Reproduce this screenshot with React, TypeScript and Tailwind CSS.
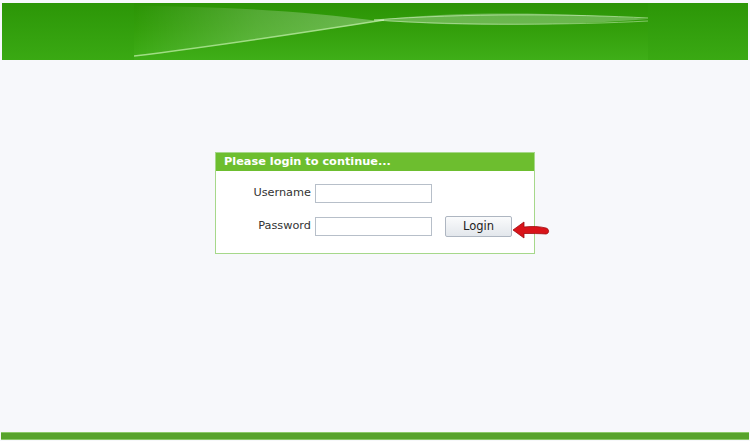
import React from 'react'

function Banner() {
  return (
    <svg width="514" height="57" viewBox="0 0 514 57" className="block">
      <defs>
        <linearGradient id="bg" x1="0" y1="0" x2="0" y2="1">
          <stop offset="0" stopColor="#2b9305" />
          <stop offset="0.5" stopColor="#34a00c" />
          <stop offset="1" stopColor="#3fae18" />
        </linearGradient>
        <linearGradient id="sheen" x1="0" y1="0" x2="1" y2="0">
          <stop offset="0" stopColor="#ffffff" stopOpacity="0" />
          <stop offset="0.5" stopColor="#ffffff" stopOpacity="0.3" />
          <stop offset="1" stopColor="#ffffff" stopOpacity="0.5" />
        </linearGradient>
      </defs>
      <rect width="514" height="57" fill="url(#bg)" />
      <path d="M0 53 C 80 42, 170 30, 245 18 C 170 8, 80 3, 0 3 Z" fill="url(#sheen)" opacity="0.6" />
      <path d="M0 53 C 90 42, 180 28, 250 17" stroke="#b9eaa0" strokeWidth="1.5" fill="none" opacity="0.8" />
      <path d="M240 17 C 330 7, 440 10, 514 16 C 440 22, 330 25, 240 17 Z" fill="#ffffff" opacity="0.28" />
      <path d="M240 17 C 330 10, 440 11, 514 15" stroke="#d6f5c6" strokeWidth="1" fill="none" opacity="0.6" />
      <path d="M240 17 C 330 23, 440 22, 514 18" stroke="#d6f5c6" strokeWidth="1" fill="none" opacity="0.5" />
    </svg>
  )
}

function Arrow() {
  return (
    <svg width="40" height="20" viewBox="0 0 40 20" className="absolute left-[511px] top-[220px]">
      <path
        d="M2 10 L13 2 L13 7 C 21 6, 29 6.5, 35 8 C 38.5 9, 38.5 13.5, 35 14 C 29 13.5, 21 13.5, 13 13.5 L13 18 Z"
        fill="#d9141a"
        stroke="#a00b0f"
        strokeWidth="0.8"
      />
    </svg>
  )
}

export default function App() {
  return (
    <div
      className="relative w-[750px] h-[441px] bg-[#f7f8fb] flex flex-col overflow-hidden"
      style={{ fontFamily: '"DejaVu Sans", Verdana, sans-serif' }}
    >
      <header className="mt-[3px] mx-[2px] h-[57px] flex">
        <div className="w-[132px] bg-gradient-to-b from-[#2c9607] to-[#3aa913]" />
        <Banner />
        <div className="flex-1 bg-gradient-to-b from-[#2c9607] to-[#3aa913]" />
      </header>

      <main className="flex-1 pt-[92px] pl-[215px]">
        <div className="w-[320px] h-[102px] border border-[#a6d88a] bg-white">
          <div className="h-[18px] bg-[#6dbe2f] px-[8px] text-[11.3px] leading-[18px] font-bold text-white">
            Please login to continue...
          </div>
          <div className="pt-[13px] flex flex-col gap-[13px]">
            <div className="flex items-center">
              <label className="w-[99px] text-right pr-[4px] text-[11.3px] text-[#333]">Username</label>
              <input className="w-[117px] h-[19px] border border-[#b7bfc9] bg-white" />
            </div>
            <div className="flex items-center">
              <label className="w-[99px] text-right pr-[4px] text-[11.3px] text-[#333]">Password</label>
              <input type="password" className="w-[117px] h-[19px] border border-[#b7bfc9] bg-white" />
              <button className="ml-[13px] w-[67px] h-[21px] border border-[#aeb6c1] rounded-[2px] bg-gradient-to-b from-[#fafbfc] to-[#e3e7ec] text-[11.5px] text-[#222]">
                Login
              </button>
            </div>
          </div>
        </div>
      </main>

      <footer className="mb-[1px] mx-[1px] h-[8px] bg-[#57a32c] border-y border-[#8cc96a]" />
      <Arrow />
    </div>
  )
}
